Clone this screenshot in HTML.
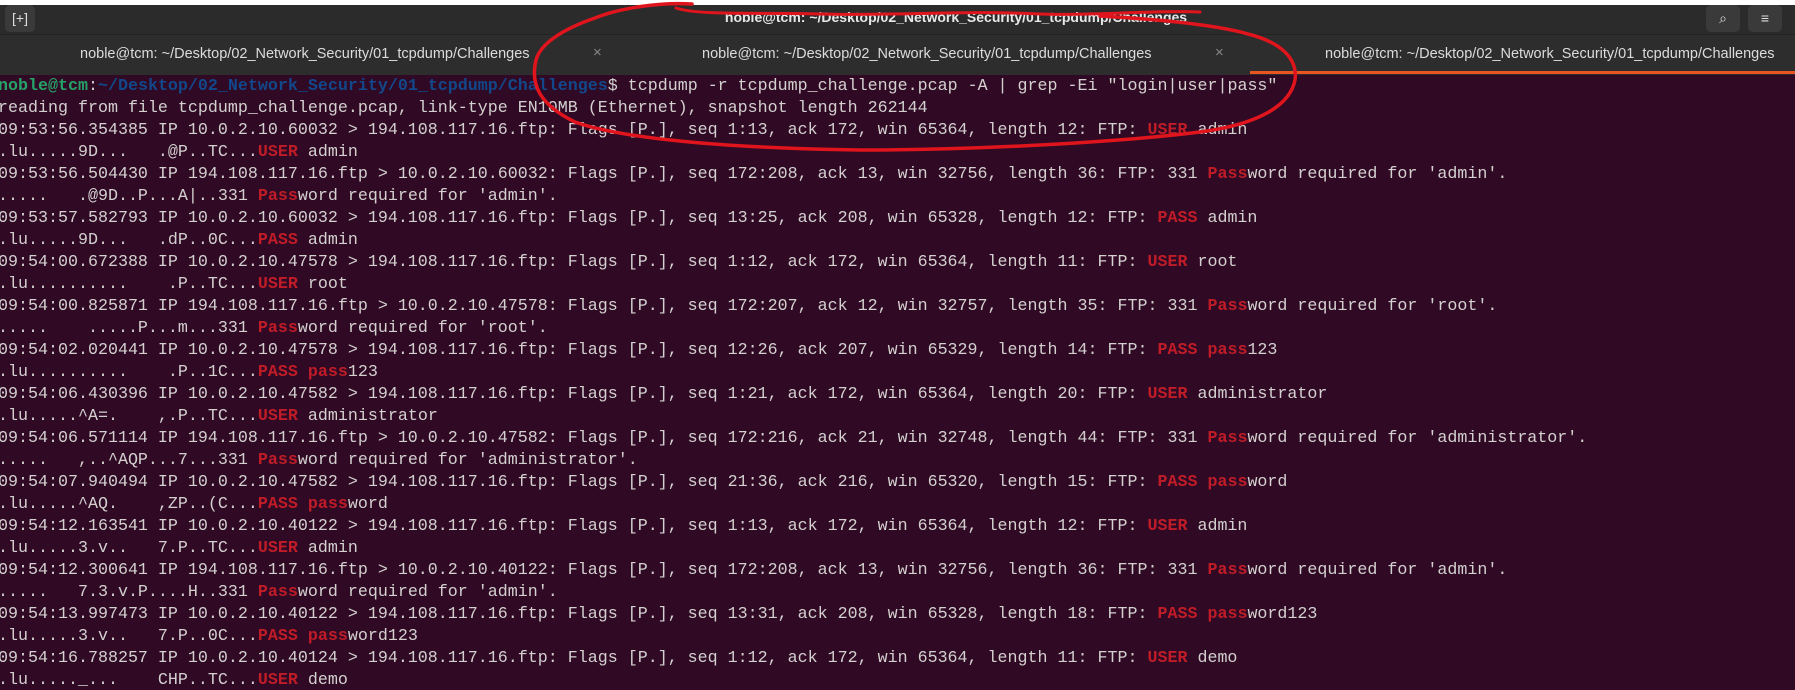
<!DOCTYPE html>
<html><head><meta charset="utf-8"><style>
html,body{margin:0;padding:0;width:1795px;height:690px;overflow:hidden;background:#300a24;position:relative}
.top{position:absolute;left:0;top:0;width:1795px;height:5px;background:#fff}
.title{position:absolute;left:0;top:5px;width:1795px;height:29px;background:#2b2b2b}
.title .t{position:absolute;left:0;width:1912px;text-align:center;top:4px;font:bold 14px "Liberation Sans",sans-serif;color:#e8e8e8}
.btn{position:absolute;top:0;height:27px;width:34px;background:#3a3a3a;border-radius:5px;color:#ddd;font:14px "Liberation Sans",sans-serif;text-align:center;line-height:26px}
.tabs{position:absolute;left:0;top:34px;width:1795px;height:40px;background:#2d2d2d;border-top:1px solid #222}
.tab{position:absolute;top:11px;font:14.5px "Liberation Sans",sans-serif;color:#dcdcdc;white-space:nowrap}
.x{position:absolute;top:9px;color:#888;font:15px "Liberation Sans",sans-serif}
.ul{position:absolute;left:1250px;top:36px;width:545px;height:3px;background:#e95420}
pre{position:absolute;left:-2px;top:76px;margin:0;font:16.67px/22px "Liberation Mono",monospace;color:#d3d0cf;white-space:pre}
.r{color:#c01c28;font-weight:bold}
.g{color:#26a269;font-weight:bold}
.b{color:#12488b;font-weight:bold}
svg{position:absolute;left:0;top:0}
</style></head><body>
<div class="top"></div>
<div class="title">
<div class="btn" style="left:5px;width:30px">[+]</div>
<div class="t">noble@tcm: ~/Desktop/02_Network_Security/01_tcpdump/Challenges</div>
<div class="btn" style="left:1706px">&#x2315;</div>
<div class="btn" style="left:1748px">&#x2261;</div>
</div>
<div class="tabs">
<div class="tab" style="left:80px">noble@tcm: ~/Desktop/02_Network_Security/01_tcpdump/Challenges</div>
<div class="x" style="left:593px">×</div>
<div class="tab" style="left:702px">noble@tcm: ~/Desktop/02_Network_Security/01_tcpdump/Challenges</div>
<div class="x" style="left:1215px">×</div>
<div class="tab" style="left:1325px">noble@tcm: ~/Desktop/02_Network_Security/01_tcpdump/Challenges</div>
<div class="ul"></div>
</div>
<pre><span class="g">noble@tcm</span>:<span class="b">~/Desktop/02_Network_Security/01_tcpdump/Challenges</span>$ tcpdump -r tcpdump_challenge.pcap -A | grep -Ei "login|user|pass"
reading from file tcpdump_challenge.pcap, link-type EN10MB (Ethernet), snapshot length 262144
09:53:56.354385 IP 10.0.2.10.60032 &gt; 194.108.117.16.ftp: Flags [P.], seq 1:13, ack 172, win 65364, length 12: FTP: <span class="r">USER</span> admin
.lu.....9D...   .@P..TC...<span class="r">USER</span> admin
09:53:56.504430 IP 194.108.117.16.ftp &gt; 10.0.2.10.60032: Flags [P.], seq 172:208, ack 13, win 32756, length 36: FTP: 331 <span class="r">Pass</span>word required for 'admin'.
.....   .@9D..P...A|..331 <span class="r">Pass</span>word required for 'admin'.
09:53:57.582793 IP 10.0.2.10.60032 &gt; 194.108.117.16.ftp: Flags [P.], seq 13:25, ack 208, win 65328, length 12: FTP: <span class="r">PASS</span> admin
.lu.....9D...   .dP..0C...<span class="r">PASS</span> admin
09:54:00.672388 IP 10.0.2.10.47578 &gt; 194.108.117.16.ftp: Flags [P.], seq 1:12, ack 172, win 65364, length 11: FTP: <span class="r">USER</span> root
.lu..........    .P..TC...<span class="r">USER</span> root
09:54:00.825871 IP 194.108.117.16.ftp &gt; 10.0.2.10.47578: Flags [P.], seq 172:207, ack 12, win 32757, length 35: FTP: 331 <span class="r">Pass</span>word required for 'root'.
.....    .....P...m...331 <span class="r">Pass</span>word required for 'root'.
09:54:02.020441 IP 10.0.2.10.47578 &gt; 194.108.117.16.ftp: Flags [P.], seq 12:26, ack 207, win 65329, length 14: FTP: <span class="r">PASS</span> <span class="r">pass</span>123
.lu..........    .P..1C...<span class="r">PASS</span> <span class="r">pass</span>123
09:54:06.430396 IP 10.0.2.10.47582 &gt; 194.108.117.16.ftp: Flags [P.], seq 1:21, ack 172, win 65364, length 20: FTP: <span class="r">USER</span> administrator
.lu.....^A=.    ,.P..TC...<span class="r">USER</span> administrator
09:54:06.571114 IP 194.108.117.16.ftp &gt; 10.0.2.10.47582: Flags [P.], seq 172:216, ack 21, win 32748, length 44: FTP: 331 <span class="r">Pass</span>word required for 'administrator'.
.....   ,..^AQP...7...331 <span class="r">Pass</span>word required for 'administrator'.
09:54:07.940494 IP 10.0.2.10.47582 &gt; 194.108.117.16.ftp: Flags [P.], seq 21:36, ack 216, win 65320, length 15: FTP: <span class="r">PASS</span> <span class="r">pass</span>word
.lu.....^AQ.    ,ZP..(C...<span class="r">PASS</span> <span class="r">pass</span>word
09:54:12.163541 IP 10.0.2.10.40122 &gt; 194.108.117.16.ftp: Flags [P.], seq 1:13, ack 172, win 65364, length 12: FTP: <span class="r">USER</span> admin
.lu.....3.v..   7.P..TC...<span class="r">USER</span> admin
09:54:12.300641 IP 194.108.117.16.ftp &gt; 10.0.2.10.40122: Flags [P.], seq 172:208, ack 13, win 32756, length 36: FTP: 331 <span class="r">Pass</span>word required for 'admin'.
.....   7.3.v.P....H..331 <span class="r">Pass</span>word required for 'admin'.
09:54:13.997473 IP 10.0.2.10.40122 &gt; 194.108.117.16.ftp: Flags [P.], seq 13:31, ack 208, win 65328, length 18: FTP: <span class="r">PASS</span> <span class="r">pass</span>word123
.lu.....3.v..   7.P..0C...<span class="r">PASS</span> <span class="r">pass</span>word123
09:54:16.788257 IP 10.0.2.10.40124 &gt; 194.108.117.16.ftp: Flags [P.], seq 1:12, ack 172, win 65364, length 11: FTP: <span class="r">USER</span> demo
.lu....._...    CHP..TC...<span class="r">USER</span> demo</pre>
<svg width="1795" height="690" viewBox="0 0 1795 690">
<path d="M692 4 C660 2 620 8 595 18 C560 30 540 45 536 60 C530 85 540 105 575 122 C620 138 720 148 860 150 C980 150 1120 142 1200 132 C1260 124 1290 105 1295 80 C1298 58 1280 42 1248 34 C1220 26 1170 20 1100 16" fill="none" stroke="#e0141c" stroke-width="3.5" stroke-linecap="round"/>
<path d="M676 8 C700 16 760 12 820 14 C900 16 960 10 1040 14 C1100 16 1150 10 1200 12" fill="none" stroke="#e0141c" stroke-width="3" stroke-linecap="round"/>
</svg>
</body></html>
